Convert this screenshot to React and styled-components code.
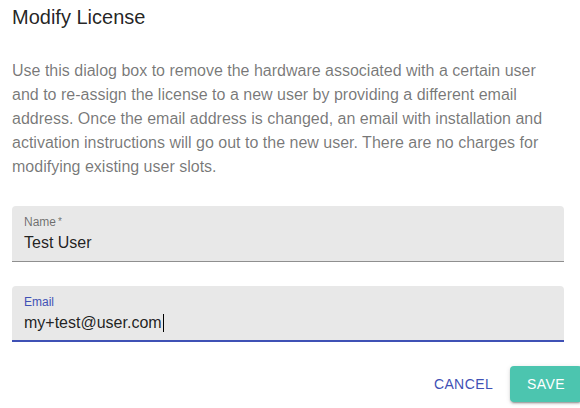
import React from "react";
import styled, { createGlobalStyle } from "styled-components";

const Global = createGlobalStyle`
  html, body { margin: 0; padding: 0; background: #fff; }
  body { font-family: "Liberation Sans", Arial, sans-serif; -webkit-font-smoothing: antialiased; }
  * { box-sizing: border-box; }
`;

const Dialog = styled.div`
  width: 580px;
  height: 408px;
  overflow: hidden;
  padding: 1px 0 0 12px;
  display: flex;
  flex-direction: column;
`;

const Title = styled.h2`
  margin: 0;
  font-size: 20px;
  font-weight: 400;
  line-height: 32px;
  color: rgba(0, 0, 0, 0.87);
`;

const Body = styled.p`
  margin: 26px 0 0;
  width: 554px;
  font-size: 16px;
  line-height: 24px;
  color: rgba(0, 0, 0, 0.54);
`;

const Fields = styled.div`
  display: flex;
  flex-direction: column;
  gap: 24px;
  margin-top: 27px;
  width: 552px;
`;

const Field = styled.div`
  position: relative;
  height: 56px;
  background: #e8e8e8;
  background-clip: padding-box;
  border-radius: 4px 4px 0 0;
  border-bottom: ${(p) => (p.$focused ? "2px solid #3f51b5" : "1px solid #8f8f8f")};
  padding: 27px 12px 0;
`;

const Label = styled.label`
  position: absolute;
  left: 12px;
  top: 10px;
  font-size: 12px;
  line-height: 12px;
  color: ${(p) => (p.$focused ? "#3f51b5" : "rgba(0,0,0,0.54)")};
`;

const Star = styled.span`
  font-size: 10px;
  vertical-align: top;
  margin-left: 2px;
`;

const Value = styled.div`
  font-size: 16px;
  line-height: 19px;
  color: rgba(0, 0, 0, 0.87);
  display: flex;
  align-items: center;
`;

const Caret = styled.span`
  display: inline-block;
  width: 1px;
  height: 18px;
  background: #000;
  margin-left: 1px;
`;

const Actions = styled.div`
  display: flex;
  justify-content: flex-end;
  align-items: center;
  gap: 9px;
  margin-top: 24px;
  margin-right: -2px;
`;

const TextButton = styled.button`
  border: 0;
  background: transparent;
  font-family: inherit;
  font-size: 14px;
  letter-spacing: 0.4px;
  color: #3f51b5;
  text-transform: uppercase;
  padding: 6px 8px;
  line-height: 24px;
  min-width: 64px;
  border-radius: 4px;
`;

const ContainedButton = styled.button`
  border: 0;
  background: #4cc5af;
  color: #fff;
  font-family: inherit;
  font-size: 14px;
  letter-spacing: 0.4px;
  text-transform: uppercase;
  padding: 6px 17px;
  line-height: 24px;
  height: 36px;
  border-radius: 4px;
  box-shadow: 0px 3px 1px -2px rgba(0,0,0,0.2), 0px 2px 2px 0px rgba(0,0,0,0.14), 0px 1px 5px 0px rgba(0,0,0,0.12);
`;

export default function App() {
  return (
    <>
      <Global />
      <Dialog>
        <Title>Modify License</Title>
        <Body>
          Use this dialog box to remove the hardware associated with a certain user and to re-assign the
          license to a new user by providing a different email address. Once the email address is changed,
          an email with installation and activation instructions will go out to the new user. There are no
          charges for modifying existing user slots.
        </Body>
        <Fields>
          <Field>
            <Label>
              Name<Star>*</Star>
            </Label>
            <Value>Test User</Value>
          </Field>
          <Field $focused>
            <Label $focused>Email</Label>
            <Value>
              my+test@user.com
              <Caret />
            </Value>
          </Field>
        </Fields>
        <Actions>
          <TextButton>Cancel</TextButton>
          <ContainedButton>Save</ContainedButton>
        </Actions>
      </Dialog>
    </>
  );
}
